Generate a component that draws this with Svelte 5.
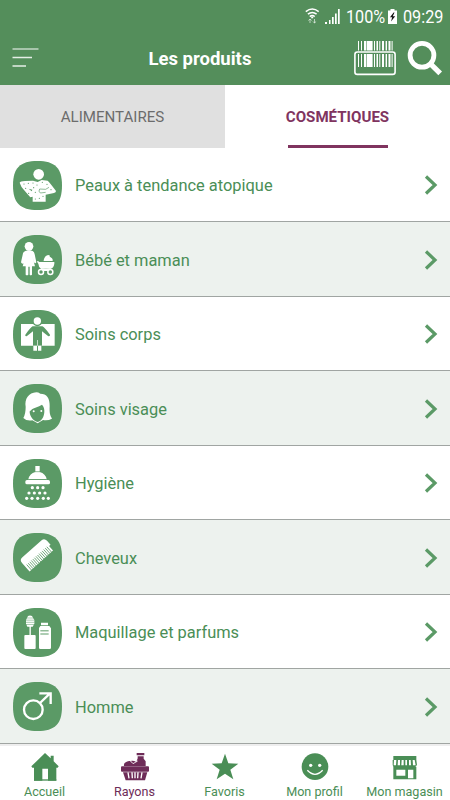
<script>
  let tab = 'cosmetiques'
  let current = 'Rayons'

  const rows = [
    { id: 'atopique', label: 'Peaux à tendance atopique' },
    { id: 'bebe', label: 'Bébé et maman' },
    { id: 'corps', label: 'Soins corps' },
    { id: 'visage', label: 'Soins visage' },
    { id: 'hygiene', label: 'Hygiène' },
    { id: 'cheveux', label: 'Cheveux' },
    { id: 'maquillage', label: 'Maquillage et parfums' },
    { id: 'homme', label: 'Homme' },
  ]

  const nav = ['Accueil', 'Rayons', 'Favoris', 'Mon profil', 'Mon magasin']

  const spots = [
    [33, 69], [46, 67], [60, 66], [72, 72], [88, 64], [102, 70], [38, 82],
    [62, 80], [114, 86], [47, 97], [67, 94], [79, 112], [90, 106], [67, 114],
  ]
  const drops = [
    [58, 86], [74, 86], [90, 86],
    [48, 102], [64, 102], [80, 102], [96, 102],
    [41, 118], [57, 118], [74, 118], [91, 118], [106, 118],
  ]
  const teeth = Array.from({ length: 14 }, (_, i) => i * 6.2)
  const bars = [[3, 1], [6, 1], [9, 2], [11.6, 6], [19, 1], [21.5, 1.5], [24.3, 1], [27, 2], [30.6, 1.4], [33.5, 2], [36.6, 1]]
</script>

<div class="app">
  <header>
    <div class="status">
      <svg class="wifi" width="15" height="16" viewBox="0 0 15 16" fill="none" stroke="#fff">
        <path d="M.8 3.6Q7.2-1.6 13.7 3.6M2.900 6.200Q7.200 2.700 11.600 6.200M4.800 8.600Q7.200 6.400 9.700 8.600" stroke-width="1.5" />
        <path d="M7.200 8.500v1.800" stroke-width="2" />
        <path d="M5 15v-4M3.400 12.500L5 11l1.600 1.500M9.500 11v4M8 13.500L9.500 15l1.600-1.500" stroke-width="1" opacity=".6" />
      </svg>
      <svg class="signal" width="15" height="15" viewBox="0 0 15 15" fill="#fff">
        <path d="M0 13h2v2H0zM4 11h1.5v4H4zM7 8h1.7v7H7zM10 4.5h1.7V15H10zM13 0h1.7v15H13z" />
      </svg>
      <span class="percent">100%</span>
      <svg class="battery" width="9" height="15" viewBox="0 0 9 15">
        <path d="M2.5 0h4v1.5H9V15H0V1.5h2.5z" fill="#fff" />
        <path d="M5.6 3.5L2 8.3h2.2L3 12.6l4.2-5.4H4.8l1.7-3.7z" fill="#111" />
      </svg>
      <span class="clock">09:29</span>
    </div>
    <div class="bar">
      <svg class="menu" width="28" height="22" viewBox="0 0 28 22" fill="none" stroke="#fff" stroke-width="1.4">
        <path d="M.5 2h26" opacity=".7" />
        <path d="M.5 10.5H20M.5 19H14" opacity=".85" />
      </svg>
      <h1>Les produits</h1>
      <svg class="barcode" width="42" height="35" viewBox="0 0 42 35">
        {#each bars as [x, w]}
          <path d="M{x + 1} 0h{w}v9.5h-{w}zM{x + 1} 13h{w}v13h-{w}z" fill="#fff" />
        {/each}
        <rect x=".9" y="11" width="40.2" height="22.4" rx="2.4" fill="none" stroke="#fff" stroke-width="1.6" />
      </svg>
      <svg class="search" width="36" height="35" viewBox="0 0 36 35" fill="none" stroke="#fff">
        <circle cx="15" cy="14.3" r="11.9" stroke-width="4.8" />
        <path d="M23 22.3l10.2 10" stroke-width="5.2" />
      </svg>
    </div>
  </header>

  <div class="tabs">
    <button class:active={tab === 'alimentaires'} on:click={() => (tab = 'alimentaires')}>
      <span>ALIMENTAIRES</span>
    </button>
    <button class:active={tab === 'cosmetiques'} on:click={() => (tab = 'cosmetiques')}>
      <span>COSMÉTIQUES</span>
    </button>
  </div>

  <ul>
    {#each rows as row}
      <li>
        <svg class="picto" viewBox="0 0 147 147" fill="#fff">
          <path class="tile" d="M73.500 0C126 0 147 21 147 73.500S126 147 73.500 147 0 126 0 73.500 21 0 73.500 0z" />
          {#if row.id === 'atopique'}
            <circle cx="77" cy="40" r="16" />
            <path d="M20 65Q22 61 36 60L60 59 74 63 86 57 104 59Q110 64 129 90 129 95 123 96L98 101V122H59V107L52 109Q44 100 33 87 24 78 20 65zM47 83L56 91 58 86z" fill-rule="evenodd" />
            <path class="line" d="M108 79L98 85 80 84Q75 91 82 96L98 94" stroke-width="2" />
            {#each spots as [x, y]}
              <circle class="tile" cx={x} cy={y} r="1.8" />
            {/each}
          {:else if row.id === 'bebe'}
            <circle cx="48" cy="34" r="13" />
            <path d="M37 48Q48 44 59 48 64 50 65 58L70 82Q67 88 63 82L58 64 66 94H57V119Q52 123 50 119V95H46V119Q42 123 38 119V94H29L38 64 32 85Q27 89 24 82L30 55Q31 50 37 48z" />
            <path d="M92 76Q95 60 109 60Q108 66 117 70 120 73 119 78H92z" />
            <path d="M73 82Q71 77 75 78L79 81H124V86Q122 99 113 101H84Q77 97 76 86z" />
            <path d="M84 102L113 107M113 102L84 107" fill="none" stroke="#fff" stroke-width="4" />
            <circle cx="84" cy="111" r="7.500" class="wheel" />
            <circle cx="112" cy="111" r="7.500" class="wheel" />
          {:else if row.id === 'corps'}
            <path d="M24 42H125V107H24z" />
            <circle class="tile" cx="73" cy="34" r="15" />
            <circle cx="73" cy="33" r="11" />
            <path class="tile" d="M59 49H88Q94 51 111 74 112 79 106 79L87 64V107H60V64L41 79Q35 79 37 74 52 53 59 49z" />
            <path d="M61 107H72V122H61zM75 107H85V122H75z" />
            <path d="M73.500 90V107" stroke="#fff" stroke-width="2" />
          {:else if row.id === 'visage'}
            <path d="M31 102Q38 90 38 69C34 45 47 26 70 25Q76 25 82 29C101 29 111 42 110 67 109 87 111 94 117 104Q104 111 90 108L74 118 58 109Q41 112 31 102z" />
            <path class="tile" d="M53 82Q54 75 67 71 80 67 87 62 95 70 94 84C93 99 86 112 74 114 62 113 51 98 50 85 50 79 53 78 53 82z" />
            <circle cx="62" cy="82" r="3" />
            <circle cx="85" cy="81" r="3" />
          {:else if row.id === 'hygiene'}
            <path d="M67 21H80V39Q98 44 101 61H46Q50 43 67 39z" />
            <rect x="37" y="63" width="74" height="13" rx="5" />
            <path class="line" d="M66 38H81M49 61.500H99" stroke-width="2" />
            {#each drops as [x, y]}
              <circle cx={x} cy={y} r="4.800" />
            {/each}
          {:else if row.id === 'cheveux'}
            <g transform="translate(23 88) rotate(-41.500)">
              <path d="M2 4Q2-8 13-8H91Q102-8 102 4V20H96V38H2z" />
              {#each teeth as x}
                <path class="line" d="M{x + 9} 17V39" stroke-width="2.400" />
              {/each}
            </g>
          {:else if row.id === 'maquillage'}
            <rect x="34" y="81" width="34" height="42" rx="3" />
            <path d="M49.500 54H53.500V82H49.500z" />
            <path d="M45 24Q51 21 57 24L60 29 64 36V47L59 56H43L39 47V36z" />
            <path class="line" d="M38 30H64M38 36.500H64M38 43H64M38 49.500H64" stroke-width="1.500" />
            <path d="M84 44H105V52H84zM82 54H109L114 61V119Q114 123 110 123H82Q78 123 78 119V60z" />
            <path class="line" d="M82 68.500H107M82 78H107" stroke-width="3" />
          {:else}
            <circle cx="61" cy="83" r="28" fill="none" stroke="#fff" stroke-width="7" />
            <path d="M81 63L111 34M79 34H113V66" fill="none" stroke="#fff" stroke-width="7" />
          {/if}
        </svg>
        <span>{row.label}</span>
        <svg class="chevron" width="14" height="20" viewBox="0 0 14 20">
          <path d="M2 1.500l9 8.500-9 8.500" fill="none" stroke="#5b9a66" stroke-width="3.200" />
        </svg>
      </li>
    {/each}
  </ul>

  <nav>
    {#each nav as item}
      <button class:current={item === current} on:click={() => (current = item)}>
        <svg width="30" height="30" viewBox="0 0 90 90" fill="currentColor">
          {#if item === 'Accueil'}
            <path d="M45 3L62 19V11H71V28L86 43 83 47H79V86H54V50H37V86H12V47H7L4 43z" />
            <path d="M12 82H79V86H12z" />
          {:else if item === 'Rayons'}
            <path d="M50 3H73V10H50zM53 13H71V20L77 28V42H12Q10 33 20 29 25 26 31 27 39 24 49 30L53 19z" />
            <path d="M31 28Q37 30 39 35L53 27" fill="none" stroke="#fff" stroke-width="2.500" />
            <rect x="3" y="43" width="84" height="16" rx="3" />
            <path d="M9 61H82L75 85H17z" />
            <path d="M24 61L27 79M36 61L37 79M45 61V79M54 61L53 79M66 61L63 79" stroke="#fff" stroke-width="4" />
          {:else if item === 'Favoris'}
            <path d="M45 5L55 34 85 35 61 53 70 82 45 65 20 82 29 53 5 35 35 34z" />
          {:else if item === 'Mon profil'}
            <circle cx="45" cy="44" r="40" />
            <circle cx="32" cy="40" r="5" fill="#fff" />
            <circle cx="59" cy="40" r="5" fill="#fff" />
            <path d="M22 55Q45 79 68 55" fill="none" stroke="#fff" stroke-width="4" />
          {:else}
            <path d="M10 12H79V24L81 39 76 44H79V82H10V44L8 39V24H10z" />
            <path d="M12 24H19L18 40H11zM24 24H30V40H23zM35 24H41V40H34zM46 24H51V40H46zM57 24H62L63 40H57zM68 24H74L77 40H69zM19 53H46V71H19zM54 53H70V79H54z" fill="#fff" />
          {/if}
        </svg>
        <span>{item}</span>
      </button>
    {/each}
  </nav>
</div>

<style>
  :global(body) {
    margin: 0;
  }

  .app {
    display: flex;
    flex-direction: column;
    width: 450px;
    height: 800px;
    overflow: hidden;
    background: #fff;
    color: #4a8e56;
    font-family: Roboto, sans-serif;
  }

  header {
    flex-shrink: 0;
    height: 85px;
    background: #548e5b;
    color: #fff;
  }

  .status {
    display: flex;
    justify-content: flex-end;
    align-items: center;
    box-sizing: border-box;
    height: 32px;
    padding-right: 6px;
    font-size: 18px;
  }

  .signal {
    margin: 0 6px 0 5px;
  }

  .percent {
    width: 39px;
    transform: scaleX(0.9);
    transform-origin: left;
  }

  .battery {
    margin: 0 6px 0 3px;
  }

  .clock {
    width: 41px;
    transform: scaleX(0.9);
    transform-origin: left;
  }

  .bar {
    display: flex;
    align-items: center;
    height: 52px;
    padding: 0 7px 0 12px;
  }

  h1 {
    flex: 1;
    margin: 0;
    padding: 1px 0 0 108.5px;
    font-size: 18.5px;
    font-weight: 700;
    white-space: nowrap;
  }

  .barcode {
    margin-right: 11px;
  }

  button {
    margin: 0;
    padding: 0;
    border: 0;
    background: none;
    font-family: inherit;
  }

  .tabs {
    display: flex;
    flex-shrink: 0;
    height: 62.6px;
  }

  .tabs button {
    display: flex;
    flex: 1;
    justify-content: center;
    background: #e0e0e0;
    color: #6c6c6c;
    font-size: 15.1px;
  }

  .tabs span {
    box-sizing: border-box;
    width: 100px;
    display: flex;
    justify-content: center;
    align-items: center;
    padding-top: 1px;
    border: solid transparent;
    border-width: 3px 0;
  }

  .tabs .active {
    background: #fff;
    color: #80345f;
    font-weight: 700;
  }

  .tabs .active span {
    border-bottom-color: #80345f;
  }

  ul {
    flex-shrink: 0;
    margin: 0;
    padding: 0;
    list-style: none;
  }

  li {
    display: flex;
    align-items: center;
    box-sizing: border-box;
    height: 74.55px;
    padding: 1.5px 12px 0 13.3px;
    border-bottom: 1px solid #a0a5a2;
    font-size: 17px;
  }

  li:nth-child(even) {
    background: #edf2ee;
  }

  li span {
    flex: 1;
    margin-left: 12.6px;
    transform: scaleX(0.965);
    transform-origin: left;
  }

  .picto {
    width: 49px;
    height: 49px;
  }

  .tile {
    fill: #5b9a66;
  }

  .line {
    fill: none;
    stroke: #5b9a66;
  }

  .wheel {
    fill: #5b9a66;
    stroke: #fff;
    stroke-width: 4.5;
  }

  nav {
    display: flex;
    flex: 1;
    min-height: 0;
    border-top: 2px solid #eee;
  }

  nav button {
    display: flex;
    flex: 1 0 90px;
    flex-direction: column;
    align-items: center;
    justify-content: flex-start;
    padding-top: 6px;
    color: #4a8e56;
    font-size: 12.6px;
    white-space: nowrap;
  }

  nav svg {
    flex-shrink: 0;
  }

  nav span {
    margin-right: 1px;
    line-height: 20px;
  }

  nav .current {
    color: #6e2c58;
  }
</style>
